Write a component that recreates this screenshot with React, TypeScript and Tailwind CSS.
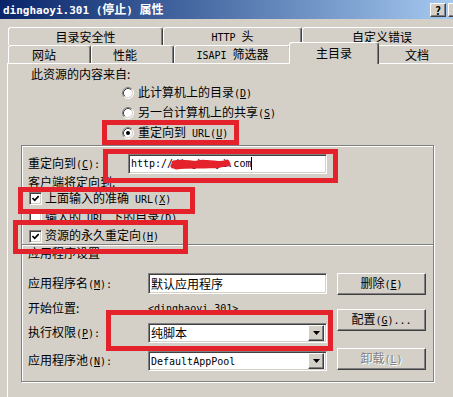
import type { ReactNode } from "react";

const sunken =
    "border border-t-[#808080] border-l-[#808080] border-b-white border-r-white shadow-[inset_1px_1px_0_#404040,inset_-1px_-1px_0_#d4d0c8]";
const raised =
    "border border-t-white border-l-white border-b-[#404040] border-r-[#404040] shadow-[inset_-1px_-1px_0_#808080]";
const etched = "border border-[#808080] shadow-[inset_1px_1px_0_#fff,1px_1px_0_#fff]";
const RED = "absolute border-[5px] border-[#e3222b]";

// "&X" marks the underlined access key
function mn(t: string) {
    const i = t.indexOf("&");
    if (i < 0) return t;
    return (
        <>
            {t.slice(0, i)}
            <u>{t[i + 1]}</u>
            {t.slice(i + 2)}
        </>
    );
}

// latin runs in a mono face, cjk runs in Noto
function Tx({ s, big }: { s: string; big?: boolean }) {
    const parts: { t: string; a: boolean }[] = [];
    for (const ch of s) {
        const a = ch.charCodeAt(0) < 128;
        const last = parts[parts.length - 1];
        if (last && last.a === a) last.t += ch;
        else parts.push({ t: ch, a });
    }
    return (
        <span className="whitespace-pre">
            {parts.map((p, i) =>
                p.a ? (
                    <span
                        key={i}
                        className={`font-['DejaVu_Sans_Mono',monospace] ${big ? "text-[11px]" : "text-[10px]"}`}
                    >
                        {mn(p.t)}
                    </span>
                ) : (
                    <span key={i}>{p.t}</span>
                )
            )}
        </span>
    );
}

function Radio({ on }: { on?: boolean }) {
    return (
        <svg width="12" height="12" viewBox="0 0 12 12" className="shrink-0">
            <circle cx="6" cy="6" r="5" fill="#fff" />
            <path d="M2.11 9.89A5.5 5.5 0 0 1 9.89 2.11" stroke="#808080" fill="none" />
            <path d="M9.89 2.11A5.5 5.5 0 0 1 2.11 9.89" stroke="#fff" fill="none" />
            <path d="M2.82 9.18A4.5 4.5 0 0 1 9.18 2.82" stroke="#404040" fill="none" />
            <path d="M9.18 2.82A4.5 4.5 0 0 1 2.82 9.18" stroke="#d4d0c8" fill="none" />
            {on && <circle cx="6" cy="6" r="2" fill="#000" />}
        </svg>
    );
}

function Check({ on }: { on?: boolean }) {
    return (
        <span className={`w-[13px] h-[13px] bg-white shrink-0 flex items-center justify-center ${sunken}`}>
            {on && (
                <svg width="7" height="7" viewBox="0 0 7 7">
                    <path d="M0.5 3 L2.7 5.3 L6.7 1" stroke="#000" strokeWidth="1.7" fill="none" />
                </svg>
            )}
        </span>
    );
}

function Tab({ w, children, pl }: { w: string; children: ReactNode; pl?: string }) {
    return (
        <div
            className={`${w} h-[18px] shrink-0 flex items-center ${pl ?? "justify-center"} border-t border-l border-r border-t-white border-l-white border-r-[#404040] rounded-t-[3px] shadow-[inset_-1px_0_0_#808080] bg-[#d4d0c8]`}
        >
            {children}
        </div>
    );
}

function Btn({ children, off }: { children: ReactNode; off?: boolean }) {
    return (
        <div
            className={`w-[89px] h-[22px] flex items-center justify-center bg-[#d4d0c8] ${raised} ${off ? "text-[#808080] [text-shadow:1px_1px_0_#fff]" : ""}`}
        >
            {children}
        </div>
    );
}

function Drop({ children }: { children: ReactNode }) {
    return (
        <div className={`w-[179px] h-[20px] bg-white flex items-center pl-[2px] pr-[2px] ${sunken}`}>
            <span className="flex-1">{children}</span>
            <span className={`w-[16px] h-[16px] bg-[#d4d0c8] flex items-center justify-center ${raised}`}>
                <svg width="7" height="4" viewBox="0 0 7 4">
                    <path d="M0 0h7L3.5 4z" fill="#000" />
                </svg>
            </span>
        </div>
    );
}

export default function App() {
    return (
        <div className="relative w-[453px] h-[397px] overflow-hidden bg-[#d4d0c8] text-black text-[12px] leading-[14px] font-['Noto_Sans_CJK_SC',sans-serif]">
            {/* title bar */}
            <div className="h-[19px] flex items-center pl-[3px] bg-linear-to-r from-[#0a246a] to-[#a6caf0]">
                <span className="text-white font-bold">
                    <Tx s="dinghaoyi.301 (停止) 属性" big />
                </span>
                <div className="ml-auto mr-[-11px] flex gap-[2px]">
                    <div className={`w-[16px] h-[14px] bg-[#d4d0c8] flex items-center justify-center font-bold text-[11px] ${raised}`}>
                        ?
                    </div>
                    <div className={`w-[16px] h-[14px] bg-[#d4d0c8] ${raised}`} />
                </div>
            </div>

            {/* tabs, back row */}
            <div className="mt-[8px] pl-[8px] flex h-[18px]">
                <Tab w="w-[155px]">目录安全性</Tab>
                <Tab w="w-[139px]">
                    <Tx s="HTTP 头" />
                </Tab>
                <Tab w="w-[160px]">自定义错误</Tab>
            </div>
            {/* tabs, front row */}
            <div className="pl-[8px] flex items-end h-[18px]">
                <Tab w="w-[83px]" pl="pl-[23px]">网站</Tab>
                <Tab w="w-[83px]" pl="pl-[21px]">性能</Tab>
                <Tab w="w-[117px]">
                    <Tx s="ISAPI 筛选器" />
                </Tab>
                <div className="relative z-10 w-[90px] h-[22px] -mx-[2px] mb-[-1px] shrink-0 flex items-start pt-[3px] justify-center bg-[#d4d0c8] border-t border-l border-r border-t-white border-l-white border-r-[#404040] rounded-t-[3px] shadow-[inset_-1px_0_0_#808080]">
                    主目录
                </div>
                <Tab w="w-[80px]">文档</Tab>
            </div>

            {/* page */}
            <div className="ml-[7px] border-t border-l border-white flex flex-col h-[400px]">
                <div className="h-[19px] flex items-center pl-[23px]">此资源的内容来自:</div>
                <div className="h-[20px] flex items-center gap-[4px] pl-[114px]">
                    <Radio />
                    <Tx s="此计算机上的目录(&D)" />
                </div>
                <div className="h-[20px] flex items-center gap-[4px] pl-[114px]">
                    <Radio />
                    <Tx s="另一台计算机上的共享(&S)" />
                </div>
                <div className="h-[19px] flex items-center gap-[4px] pl-[114px]">
                    <Radio on />
                    <Tx s="重定向到 URL(&U)" />
                </div>

                <div className={`mt-[3px] ml-[13px] w-[413px] h-[237px] flex flex-col ${etched}`}>
                    <div className="pl-[6px] flex flex-col">
                        <div className="mt-[7px] h-[21px] flex items-center">
                            <span className="w-[100px]">
                                <Tx s="重定向到(&C):" />
                            </span>
                            <div className={`w-[199px] h-[20px] bg-white flex items-center pl-[2px] font-['DejaVu_Sans_Mono',monospace] text-[10px] whitespace-pre ${sunken}`}>
                                <span>http://</span>
                                <span className="relative">
                                    dinghaoyi
                                    <svg width="62" height="14" viewBox="0 0 62 14" className="absolute left-[-3px] top-0">
                                        <path
                                            d="M3 9 C10 5 16 10 24 7 S36 5 42 8 S52 6 58 7 M4 6 C14 3 22 8 32 6 S48 9 57 5 M6 10 C20 8 34 10 50 8"
                                            stroke="#e3222b"
                                            strokeWidth="5"
                                            fill="none"
                                            strokeLinecap="round"
                                        />
                                    </svg>
                                </span>
                                <span>.com</span>
                                <span className="w-px h-[13px] bg-black" />
                            </div>
                        </div>
                        <div className="h-[16px] flex items-center">客户端将定向到:</div>
                        <div className="h-[17px] flex items-center gap-[3px] pl-[1px]">
                            <Check on />
                            <Tx s="上面输入的准确 URL(&X)" />
                        </div>
                        <div className="h-[21px] flex items-center gap-[3px] pl-[1px]">
                            <Check />
                            <Tx s="输入的 URL 下的目录(&D)" />
                        </div>
                        <div className="h-[16px] flex items-center gap-[3px] pl-[1px]">
                            <Check on />
                            <Tx s="资源的永久重定向(&H)" />
                        </div>
                    </div>

                    <div className="h-[2px] border-t border-b border-t-[#808080] border-b-white" />

                    <div className="pl-[6px] pr-[7px] flex flex-col">
                        <div className="h-[14px] flex items-center">应用程序设置</div>
                        <div className="mt-[12px] flex">
                            <div className="w-[299px] flex flex-col">
                                <div className="h-[23px] flex items-center">
                                    <span className="w-[120px]">
                                        <Tx s="应用程序名(&M):" />
                                    </span>
                                    <div className={`w-[179px] h-[21px] bg-white flex items-center pl-[2px] ${sunken}`}>
                                        默认应用程序
                                    </div>
                                </div>
                                <div className="h-[25px] flex items-center">
                                    <span className="w-[120px]">开始位置:</span>
                                    <Tx s="<dinghaoyi.301>" />
                                </div>
                                <div className="h-[25px] flex items-center">
                                    <span className="w-[120px]">
                                        <Tx s="执行权限(&P):" />
                                    </span>
                                    <Drop>纯脚本</Drop>
                                </div>
                                <div className="h-[31px] flex items-center">
                                    <span className="w-[120px]">
                                        <Tx s="应用程序池(&N):" />
                                    </span>
                                    <Drop>
                                        <Tx s="DefaultAppPool" />
                                    </Drop>
                                </div>
                            </div>
                            <div className="ml-[10px] pt-[1px] flex flex-col">
                                <Btn>
                                    <Tx s="删除(&E)" />
                                </Btn>
                                <div className="mt-[14px]">
                                    <Btn>
                                        <Tx s="配置(&G)..." />
                                    </Btn>
                                </div>
                                <div className="mt-[17px]">
                                    <Btn off>
                                        <Tx s="卸载(&L)" />
                                    </Btn>
                                </div>
                            </div>
                        </div>
                    </div>
                </div>
            </div>

            {/* red annotation boxes drawn over the dialog */}
            <div className={`${RED} left-[102px] top-[120px] w-[137px] h-[25px]`} />
            <div className={`${RED} left-[103px] top-[149px] w-[235px] h-[34px]`} />
            <div className={`${RED} left-[18px] top-[187px] w-[177px] h-[27px]`} />
            <div className={`${RED} left-[13px] top-[220px] w-[175px] h-[34px]`} />
            <div className={`${RED} left-[106px] top-[310px] w-[227px] h-[41px]`} />
        </div>
    );
}
